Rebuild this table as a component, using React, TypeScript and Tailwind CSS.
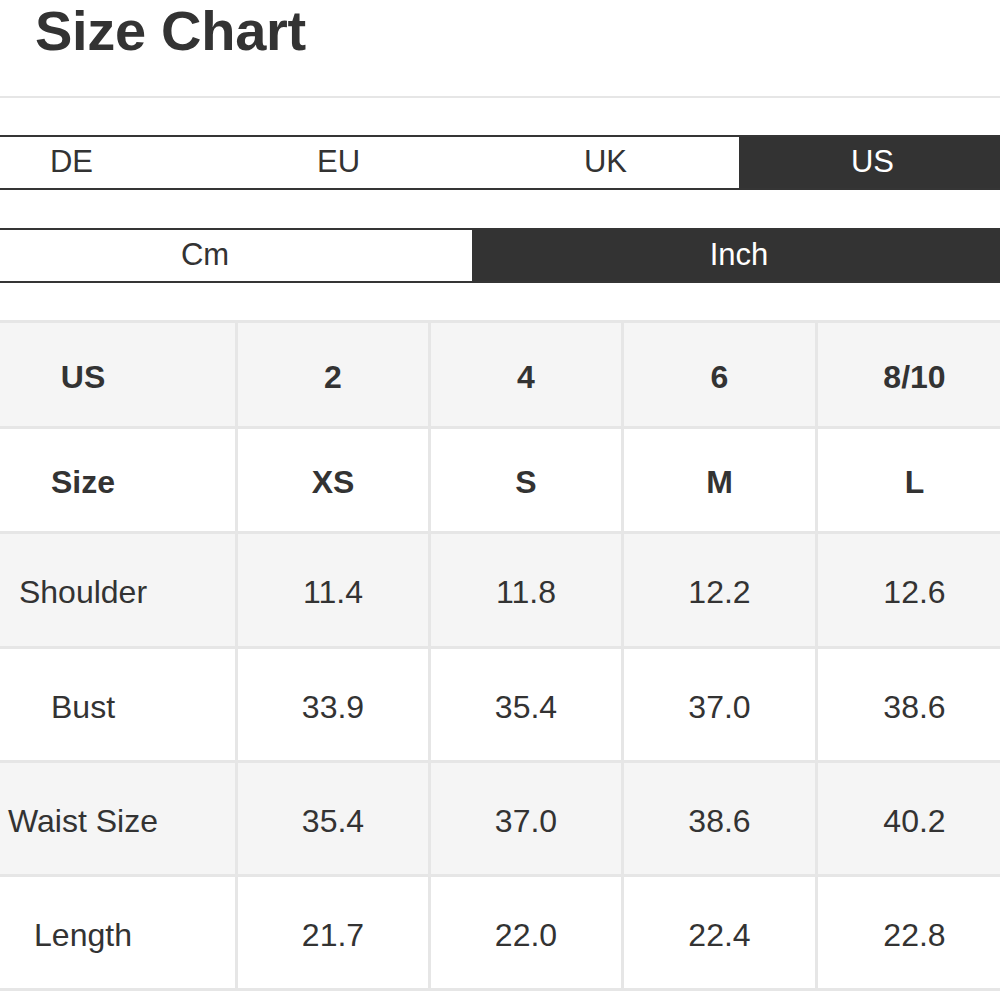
const regions = ["DE", "EU", "UK", "US"];
const units = ["Cm", "Inch"];

type Row = { cells: string[]; bold?: boolean; height: string; shaded: boolean };

const rows: Row[] = [
  { cells: ["US", "2", "4", "6", "8/10"], bold: true, height: "h-[103px]", shaded: true },
  { cells: ["Size", "XS", "S", "M", "L"], bold: true, height: "h-[102px]", shaded: false },
  { cells: ["Shoulder", "11.4", "11.8", "12.2", "12.6"], height: "h-[112px]", shaded: true },
  { cells: ["Bust", "33.9", "35.4", "37.0", "38.6"], height: "h-[111px]", shaded: false },
  { cells: ["Waist Size", "35.4", "37.0", "38.6", "40.2"], height: "h-[111px]", shaded: true },
  { cells: ["Length", "21.7", "22.0", "22.4", "22.8"], height: "h-[111px]", shaded: false },
];

function Toggle({ options, active }: { options: string[]; active: string }) {
  return (
    <div className="-ml-[64px] flex h-[55px] w-[1072px] overflow-hidden rounded-[6px] border-2 border-[#353535]">
      {options.map((opt) => (
        <div
          key={opt}
          className={
            opt === active
              ? "flex flex-1 items-center justify-center bg-[#333333] text-white"
              : "flex flex-1 items-center justify-center bg-white text-[#333333]"
          }
        >
          {opt}
        </div>
      ))}
    </div>
  );
}

export default function App() {
  return (
    <div
      className="h-[1000px] w-[1000px] overflow-hidden bg-white text-[#333333]"
      style={{ fontFamily: '"Liberation Sans", Arial, sans-serif' }}
    >
      <h1 className="pl-[35px] pt-[3px] text-[56px] font-bold leading-none tracking-[-0.3px]">
        Size Chart
      </h1>

      <div className="mt-[37px] h-[2px] w-full bg-[#e6e6e6]" />

      <div className="mt-[37px] text-[31px]">
        <Toggle options={regions} active="US" />
      </div>

      <div className="mt-[38px] text-[31px]">
        <Toggle options={units} active="Inch" />
      </div>

      <div className="-ml-[69px] mt-[37px] w-[1082px] border-y-[3px] border-[#e6e6e6] bg-[#e6e6e6] text-[32px]">
        <div className="flex flex-col gap-[3px]">
          {rows.map((row) => (
            <div
              key={row.cells[0]}
              className={`grid grid-cols-[304px_190px_190px_191px_193px] gap-[3px] ${row.height}`}
            >
              {row.cells.map((cell, i) => (
                <div
                  key={i}
                  className={`flex items-center justify-center pt-[4px] ${
                    row.shaded ? "bg-[#f5f5f5]" : "bg-white"
                  } ${row.bold ? "font-bold" : ""}`}
                >
                  {cell}
                </div>
              ))}
            </div>
          ))}
        </div>
      </div>
    </div>
  );
}
